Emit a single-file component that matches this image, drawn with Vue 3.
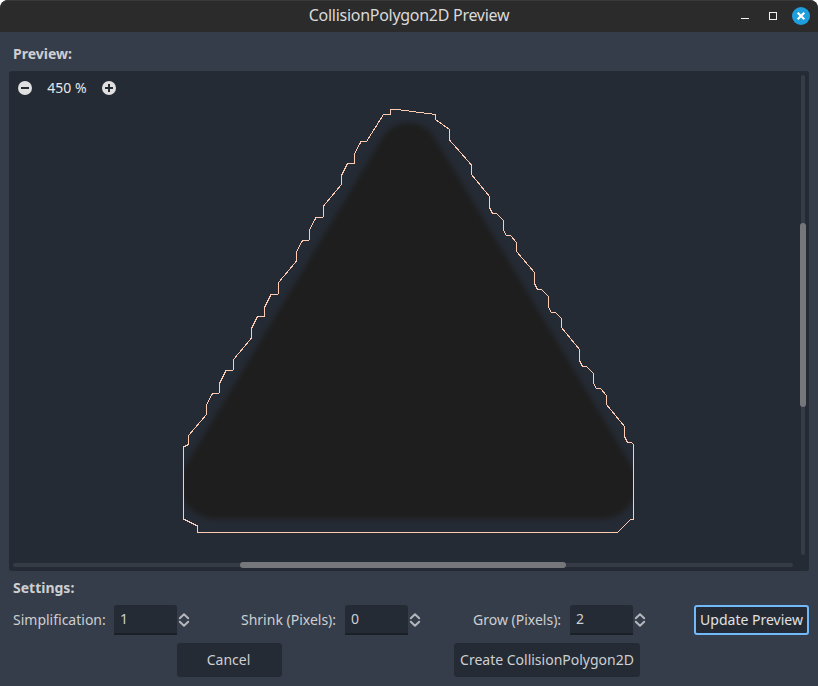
<script setup>
import { ref } from 'vue'

const zoom = ref(450)
const fields = ref([
  { id: 'simplification', label: 'Simplification:', value: 1 },
  { id: 'shrink', label: 'Shrink (Pixels):', value: 0 },
  { id: 'grow', label: 'Grow (Pixels):', value: 2 },
])

// Outline vertices, clockwise from the top, in window space.
const outline = [
  [390.5, 109.5], [397, 109.5], [435.5, 114.5], [435.5, 119.5], [449.5, 129.5], [449.5, 140], [471.5, 165], [471.5, 174.5],
  [489.5, 196.5], [489.5, 207.5], [492.5, 213.5], [496.5, 213.5], [503.5, 220.5], [503.5, 230.5], [506.5, 235.5],
  [510.5, 235.5], [516.5, 242.5], [516.5, 251.5], [534.5, 272.5], [534.5, 283.5], [537.5, 289.5], [541.5, 289.5],
  [548.5, 296.5], [548.5, 307.5], [551.5, 312.5], [555.5, 312.5], [561.5, 318.5], [561.5, 327.5], [579.5, 349.5],
  [579.5, 360.5], [582.5, 366.5], [586.5, 366.5], [593.5, 373.5], [593.5, 383.5], [596.5, 388.5], [600.5, 388.5],
  [606.5, 395.5], [606.5, 404.5], [624.5, 426.5], [624.5, 436.5], [627.5, 442.5], [631.5, 442.5], [633.5, 444.5],
  [633.5, 519.5], [630.5, 519.5], [617.5, 532.5], [197.5, 532.5], [197.5, 526], [183.5, 519], [183.5, 447],
  [188.5, 444.5], [188.5, 435.5], [206.5, 414.5], [206.5, 405], [212.5, 393.5], [218.5, 393.5], [219.5, 392],
  [219.5, 383.5], [226, 370.5], [232.5, 370.5], [233.5, 369], [233.5, 359.5], [251.5, 338], [251.5, 328.5],
  [257.5, 316.5], [264.5, 316.5], [264.5, 307.5], [271, 294.5], [277.5, 294.5], [278.5, 293], [278.5, 282.5],
  [296.5, 261], [296.5, 252], [302.5, 240.5], [308.5, 240.5], [309.5, 239], [309.5, 230], [316, 217.5],
  [322.5, 217.5], [323.5, 216], [323.5, 206], [341.5, 184.5], [341.5, 175.5], [347.5, 163.5], [354.5, 163.5],
  [354.5, 154], [361, 141.5], [366.5, 141.5], [383.5, 114.5], [390.5, 114.5],
]
const points = outline.map((p) => p.join(',')).join(' ')
</script>

<template>
  <div class="window">
    <header class="titlebar">
      <span class="spacer"></span>
      <h1 class="title">CollisionPolygon2D Preview</h1>
      <div class="controls">
        <svg width="9" height="10" viewBox="0 0 9 10"><rect x="0" y="7" width="8" height="1" fill="#f2f2f2" /></svg>
        <svg class="max" width="8" height="8" viewBox="0 0 8 8"><rect x=".5" y=".5" width="7" height="7" fill="none" stroke="#f2f2f2" /></svg>
        <svg width="18" height="18" viewBox="0 0 18 18">
          <circle cx="9" cy="9" r="9" fill="#1f9ede" />
          <path d="M5.7 5.7l6.6 6.6M12.3 5.7l-6.6 6.6" stroke="#fff" stroke-width="2.2" />
        </svg>
      </div>
    </header>

    <main class="body">
      <h2 class="heading">Preview:</h2>
      <section class="panel">
        <svg class="canvas" width="800" height="500" viewBox="9 71 800 500">
          <defs>
            <filter id="soft" x="-10%" y="-10%" width="120%" height="120%" color-interpolation-filters="sRGB"><feGaussianBlur stdDeviation="2.8" /></filter>
            <clipPath id="sprite"><rect x="184" y="95" width="449.5" height="450" /></clipPath>
          </defs>
          <g clip-path="url(#sprite)">
            <path class="shape" d="M382.4 137.8A30.5 30.5 0 0 1 434.6 137.8L631.7 466A35 35 0 0 1 601.7 519H215.3A35 35 0 0 1 185.3 466Z" filter="url(#soft)" />
          </g>
          <polygon class="outline" :points="points" />
        </svg>
        <div class="zoombar">
          <svg width="14" height="14" viewBox="0 0 14 14">
            <circle cx="7" cy="7" r="7" fill="#e0e0e0" /><path d="M3 7h8" stroke="#252b34" stroke-width="2" />
          </svg>
          <span class="percent">{{ zoom }} %</span>
          <svg width="14" height="14" viewBox="0 0 14 14">
            <circle cx="7" cy="7" r="7" fill="#e0e0e0" /><path d="M3 7h8M7 3v8" stroke="#252b34" stroke-width="2" />
          </svg>
        </div>
        <div class="track vertical"><div class="grabber"></div></div>
        <div class="track horizontal"><div class="grabber"></div></div>
      </section>

      <h2 class="heading settings">Settings:</h2>
      <div class="fields">
        <div v-for="f in fields" :key="f.id" class="field" :class="f.id">
          <span class="label">{{ f.label }}</span>
          <span class="input">{{ f.value }}</span>
          <svg width="12" height="16" viewBox="0 0 12 16">
            <path d="M1.8 6.2L6 2.2l4.2 4M1.8 9.8L6 13.8l4.2-4" fill="none" stroke="#b4b6ba" stroke-width="2" stroke-linecap="round" stroke-linejoin="round" />
          </svg>
        </div>
        <button class="btn update">Update Preview</button>
      </div>
      <div class="actions">
        <button class="btn cancel">Cancel</button>
        <button class="btn create">Create CollisionPolygon2D</button>
      </div>
    </main>
  </div>
</template>

<style>
body {
  margin: 0;
  background: #fff;
}
</style>

<style scoped>
.window {
  width: 818px;
  height: 686px;
  box-sizing: border-box;
  overflow: hidden;
  border-radius: 8px 8px 0 0;
  background: #363d4a;
  color: #cdcfd2;
  font: 14px/20px "Noto Sans", sans-serif;
}
.titlebar {
  display: grid;
  grid-template-columns: 1fr auto 1fr;
  align-items: center;
  height: 32px;
  box-sizing: border-box;
  background: #2b2b2b;
  box-shadow: inset 0 1px #393939;
  border-radius: 8px 8px 0 0;
}
.title {
  margin: 0;
  padding-bottom: 2px;
  font-size: 16px;
  line-height: 22px;
  font-weight: 400;
  letter-spacing: -0.28px;
  color: #dadada;
  white-space: nowrap;
}
.controls {
  display: flex;
  align-items: center;
  justify-content: flex-end;
  padding-right: 8px;
}
.controls .max {
  margin: 0 15px 0 19px;
}
.body {
  padding: 0 9px;
}
.heading {
  margin: 0;
  padding: 12px 4px 0;
  height: 27px;
  font-size: 14px;
  line-height: 20px;
  font-weight: 700;
}
.heading.settings {
  padding-top: 7px;
}
.panel {
  display: grid;
  grid-template: 491px 9px / 791px 9px;
  width: 800px;
  height: 500px;
  border-radius: 3px;
  overflow: hidden;
  background: #252b34;
}
.canvas {
  grid-area: 1 / 1 / 3 / 3;
  display: block;
}
.shape {
  fill: #1e1e1e;
}
.outline {
  fill: none;
  stroke: #ffccb3;
  stroke-width: 1;
  shape-rendering: crispEdges;
}
.zoombar {
  grid-area: 1 / 1;
  display: flex;
  align-items: center;
  align-self: start;
  padding: 7px 0 0 9px;
}
.zoombar svg {
  display: block;
}
.percent {
  width: 70px;
  text-align: center;
  color: #e6e7e9;
}
.track {
  background: #363b47;
  border-radius: 2px;
}
.grabber {
  border-radius: 3px;
  background: #75777b;
}
.vertical {
  grid-area: 1 / 2;
  width: 4px;
  height: 480px;
  margin: 4px 0 0 1px;
}
.vertical .grabber {
  width: 6px;
  height: 184px;
  transform: translate(-1px, 148px);
}
.horizontal {
  grid-area: 2 / 1;
  width: 780px;
  height: 4px;
  margin: 1px 0 0 4px;
}
.horizontal .grabber {
  width: 326px;
  height: 6px;
  transform: translate(227px, -1px);
}
.fields {
  display: grid;
  grid-template-columns: 228px 232px 225px 115px;
  height: 30px;
}
.field {
  display: flex;
  align-items: center;
  padding-left: 4px;
  white-space: nowrap;
}
.label {
  flex: none;
}
.simplification .label {
  width: 101px;
}
.shrink .label {
  width: 104px;
}
.grow .label {
  width: 97px;
}
.input {
  box-sizing: border-box;
  flex: none;
  width: 63px;
  height: 30px;
  padding: 4px 6px 0;
  border-bottom: 2px solid #1b1f26;
  border-radius: 3px 3px 0 0;
  background: #252b34;
}
.field svg {
  flex: none;
  margin-left: 1px;
}
.btn {
  box-sizing: border-box;
  padding: 0;
  border: 0;
  border-radius: 3px;
  background: #252b34;
  color: #cdcfd2;
  font: inherit;
  white-space: nowrap;
}
.update {
  width: 115px;
  height: 30px;
  border: 2px solid #70bafa;
  color: #e0e1e3;
}
.actions {
  display: flex;
  gap: 172px;
  padding: 8px 0 0 168px;
}
.actions .btn {
  height: 34px;
}
.cancel {
  width: 105px;
  padding-right: 2px;
}
.create {
  width: 186px;
}
</style>
